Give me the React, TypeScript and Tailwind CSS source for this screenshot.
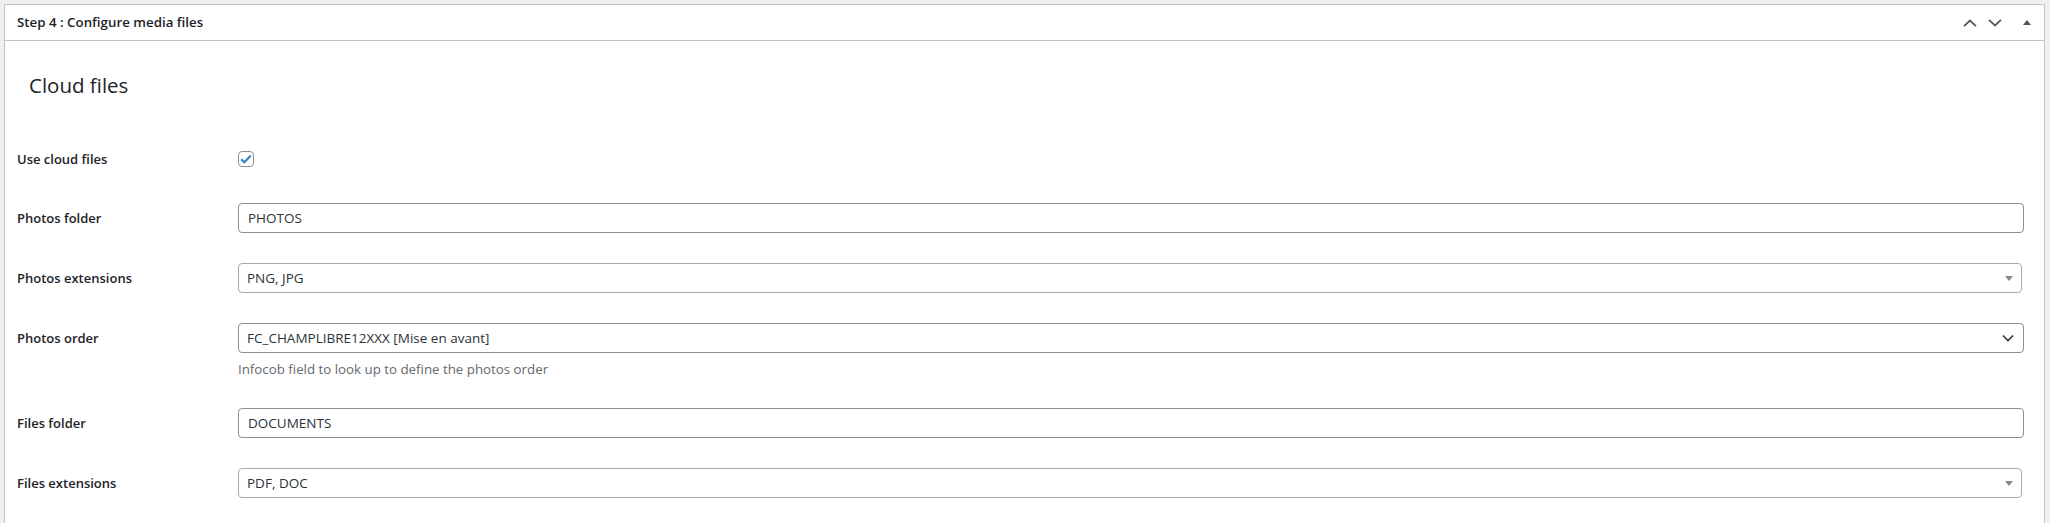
import React from "react";

function ChevronUp() {
  return (
    <svg width="14" height="8" viewBox="0 0 14 8" fill="none">
      <path d="M1 7.2L7 1.5L13 7.2" stroke="#50575e" strokeWidth="1.8" />
    </svg>
  );
}
function ChevronDown() {
  return (
    <svg width="14" height="8" viewBox="0 0 14 8" fill="none">
      <path d="M1 0.8L7 6.5L13 0.8" stroke="#50575e" strokeWidth="1.8" />
    </svg>
  );
}
function TriUp() {
  return (
    <svg width="8" height="5" viewBox="0 0 8 5">
      <path d="M0 5L4 0L8 5Z" fill="#50575e" />
    </svg>
  );
}
function Select2Arrow() {
  return (
    <svg width="8" height="5" viewBox="0 0 8 5">
      <path d="M0 0L8 0L4 5Z" fill="#888888" />
    </svg>
  );
}
function NativeChevron() {
  return (
    <svg width="12" height="8" viewBox="0 0 12 8" fill="none">
      <path d="M1 1.5L6 6.5L11 1.5" stroke="#2c3338" strokeWidth="1.6" />
    </svg>
  );
}

function Label({ children }: { children: React.ReactNode }) {
  return (
    <div className="w-[221px] shrink-0 pt-[2px] text-[13px] font-semibold text-[#1d2327]">
      {children}
    </div>
  );
}

function TextInput({ value }: { value: string }) {
  return (
    <div className="flex h-[30px] flex-1 items-center rounded-[4px] border border-[#8c8f94] bg-white pl-[9px] text-[13.5px] text-[#2c3338]">
      {value}
    </div>
  );
}

function Select2({ value }: { value: string }) {
  return (
    <div className="mr-[2px] flex h-[30px] flex-1 items-center justify-between rounded-[4px] border border-[#aaaaaa] bg-white pl-[8px] pr-[8px] text-[13.5px] text-[#2c3338]">
      <span>{value}</span>
      <Select2Arrow />
    </div>
  );
}

function NativeSelect({ value }: { value: string }) {
  return (
    <div className="flex h-[30px] w-full items-center justify-between rounded-[4px] border border-[#8c8f94] bg-white pl-[8px] pr-[9px] text-[13.5px] text-[#2c3338]">
      <span>{value}</span>
      <NativeChevron />
    </div>
  );
}

export default function App() {
  return (
    <div className="min-h-[523px] bg-[#f0f0f1] pl-[4px] pr-[5px] pt-[4px] font-['Open_Sans','Noto_Sans',sans-serif]">
      <div className="border border-[#c3c4c7] bg-white pb-[30px]">
        <div className="flex h-[36px] items-center justify-between border-b border-[#c3c4c7] pl-[12px] pr-[13px]">
          <h2 className="text-[13.3px] font-semibold text-[#1d2327]">
            Step 4 : Configure media files
          </h2>
          <div className="flex items-center">
            <ChevronUp />
            <div className="w-[11px]" />
            <ChevronDown />
            <div className="w-[21px]" />
            <TriUp />
          </div>
        </div>

        <div className="flex h-[89px] items-center pl-[24px]">
          <h3 className="text-[20.5px] font-normal text-[#1d2327]">Cloud files</h3>
        </div>

        <div className="pl-[12px] pr-[20px]">
          <div className="flex h-[58px] items-center">
            <Label>Use cloud files</Label>
            <div className="flex h-[16px] w-[16px] items-center justify-center rounded-[4px] border border-[#8c8f94] bg-white">
              <svg width="12" height="10" viewBox="0 0 12 10" fill="none">
                <path d="M1.2 5.2L4.4 8.3L10.8 1.4" stroke="#3582c4" strokeWidth="2.2" />
              </svg>
            </div>
          </div>

          <div className="flex items-center py-[15px]">
            <Label>Photos folder</Label>
            <TextInput value="PHOTOS" />
          </div>

          <div className="flex items-center py-[15px]">
            <Label>Photos extensions</Label>
            <Select2 value="PNG, JPG" />
          </div>

          <div className="flex items-start pb-[14px] pt-[15px]">
            <div className="flex h-[30px] items-center">
              <Label>Photos order</Label>
            </div>
            <div className="flex flex-1 flex-col">
              <NativeSelect value="FC_CHAMPLIBRE12XXX [Mise en avant]" />
              <p className="mt-[6px] h-[20px] text-[13.3px] leading-[20px] text-[#646970]">
                Infocob field to look up to define the photos order
              </p>
            </div>
          </div>

          <div className="flex items-center py-[15px]">
            <Label>Files folder</Label>
            <TextInput value="DOCUMENTS" />
          </div>

          <div className="flex items-center py-[15px]">
            <Label>Files extensions</Label>
            <Select2 value="PDF, DOC" />
          </div>
        </div>
      </div>
    </div>
  );
}
